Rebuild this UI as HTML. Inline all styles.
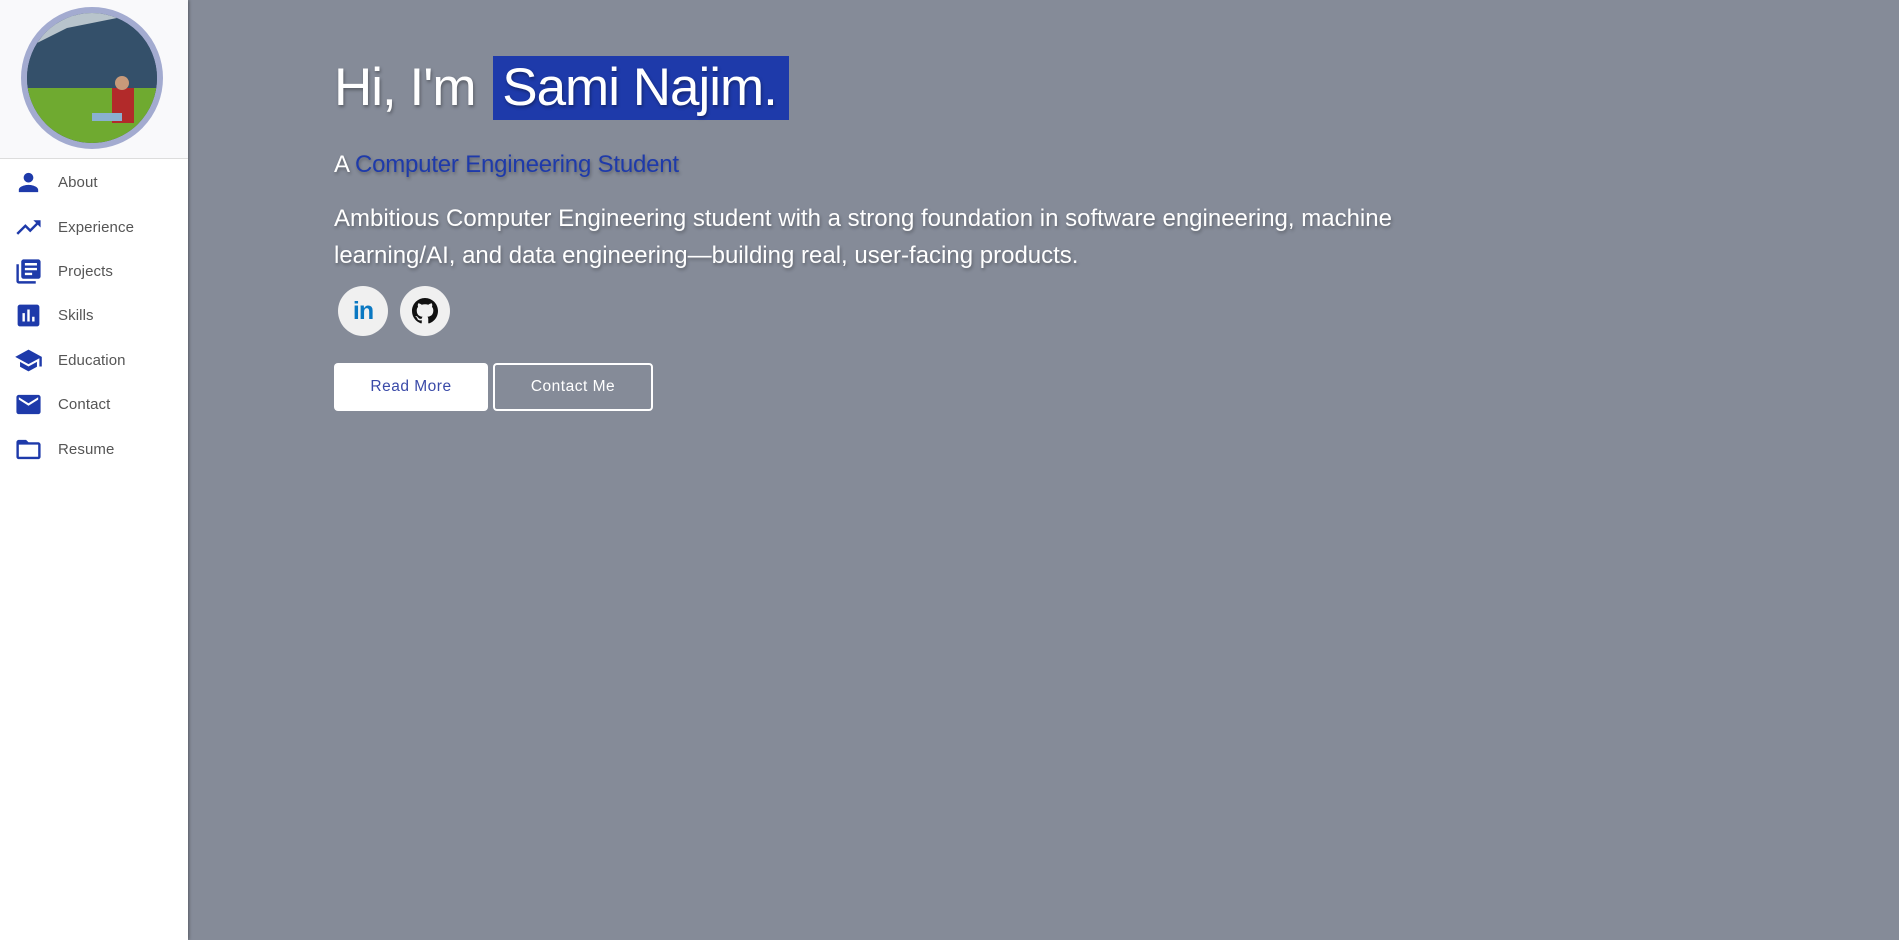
<!DOCTYPE html>
<html><head><meta charset="utf-8"><style>
*{margin:0;padding:0;box-sizing:border-box}
body{width:1899px;height:940px;overflow:hidden;background:#858b98;font-family:"Liberation Sans",sans-serif;position:relative}
#side{position:absolute;left:0;top:0;width:188px;height:940px;background:#fff;box-shadow:1px 0 3px rgba(0,0,0,.35)}
#head{height:159px;background:#f9f9fb;border-bottom:1px solid #ddd;position:relative}
#av{position:absolute;left:21px;top:7px;width:142px;height:142px;border-radius:50%;border:6px solid #a3abd0;overflow:hidden;background:#2d4558}
.nav{position:absolute;left:0;height:30px;display:flex;align-items:center}
.nav svg{position:absolute;left:14px;width:29px;height:29px;fill:#1e3aaa}
.nav span{position:absolute;left:58px;top:7px;font-size:15px;color:#555;white-space:nowrap;letter-spacing:.1px}
#main{position:absolute;left:334px;top:0;color:#fff}
h1{position:absolute;top:56px;left:0;font-weight:300;font-size:53px;letter-spacing:-1px;white-space:nowrap;text-shadow:1px 2px 3px rgba(0,0,0,.35);line-height:64px}
h1 b{font-weight:300;background:#1e3aaa;padding:2px 12px 3px 9px;margin-left:4px}
h2{position:absolute;top:151px;font-weight:300;font-size:24px;letter-spacing:-.2px;white-space:nowrap;text-shadow:1px 2px 3px rgba(0,0,0,.3)}
h2 i{font-style:normal;color:#1e3aaa}
p{position:absolute;top:200px;width:1120px;font-size:24px;font-weight:300;letter-spacing:0;line-height:37px;text-shadow:1px 2px 3px rgba(0,0,0,.3)}
.c{position:absolute;top:286px;width:50px;height:50px;border-radius:50%;background:#f0f0f0;display:flex;align-items:center;justify-content:center}
.btn{position:absolute;top:363px;height:48px;border-radius:4px;font-size:15.5px;display:flex;align-items:center;justify-content:center;letter-spacing:.5px}
</style></head><body>
<div id="side">
<div id="head"><div id="av"><svg width="130" height="130" viewBox="0 0 130 130"><path d="M0 40 L20 18 L50 8 L90 2 L130 10 L130 80 L0 80Z" fill="#34506a"/><path d="M0 0H130V20L90 5L40 15L0 35Z" fill="#b8c4cc"/><rect x="0" y="75" width="130" height="55" fill="#6faa30"/><rect x="85" y="75" width="22" height="35" fill="#b22a2a"/><circle cx="95" cy="70" r="7" fill="#c89a7a"/><rect x="65" y="100" width="30" height="8" fill="#8ab0d0"/></svg></div></div>
<div class="nav" style="top:167px"><svg viewBox="0 0 24 24"><path d="M12 12c2.21 0 4-1.790 4-4s-1.79-4-4-4-4 1.79-4 4 1.79 4 4 4zm0 2c-2.67 0-8 1.34-8 4v2h16v-2c0-2.66-5.33-4-8-4z"/></svg><span>About</span></div>
<div class="nav" style="top:212px"><svg viewBox="0 0 24 24"><path d="M16 6l2.29 2.29-4.88 4.88-4-4L2 16.59 3.41 18l6-6 4 4 6.3-6.29L22 12V6z"/></svg><span>Experience</span></div>
<div class="nav" style="top:256px"><svg viewBox="0 0 24 24"><path d="M4 6H2v14c0 1.1.9 2 2 2h14v-2H4V6zm16-4H8c-1.1 0-2 .9-2 2v12c0 1.1.9 2 2 2h12c1.1 0 2-.9 2-2V4c0-1.1-.9-2-2-2zm-1 9H9V9h10v2zm-4 4H9v-2h6v2zm4-8H9V5h10v2z"/></svg><span>Projects</span></div>
<div class="nav" style="top:300px"><svg viewBox="0 0 24 24"><path d="M19 3H5c-1.1 0-2 .9-2 2v14c0 1.1.9 2 2 2h14c1.1 0 2-.9 2-2V5c0-1.1-.9-2-2-2zM9 17H7v-7h2v7zm4 0h-2V7h2v10zm4 0h-2v-4h2v4z"/></svg><span>Skills</span></div>
<div class="nav" style="top:345px"><svg viewBox="0 0 24 24"><path d="M5 13.18v4L12 21l7-3.82v-4L12 17l-7-3.82zM12 3L1 9l11 6 9-4.91V17h2V9L12 3z"/></svg><span>Education</span></div>
<div class="nav" style="top:389px"><svg viewBox="0 0 24 24"><path d="M20 4H4c-1.1 0-1.99.9-1.99 2L2 18c0 1.1.9 2 2 2h16c1.1 0 2-.9 2-2V6c0-1.1-.9-2-2-2zm0 4l-8 5-8-5V6l8 5 8-5v2z"/></svg><span>Contact</span></div>
<div class="nav" style="top:434px"><svg viewBox="0 0 24 24"><path d="M20 6h-8l-2-2H4c-1.1 0-1.99.9-1.99 2L2 18c0 1.1.9 2 2 2h16c1.1 0 2-.9 2-2V8c0-1.1-.9-2-2-2zm0 12H4V8h16v10z"/></svg><span>Resume</span></div>
</div>
<div id="main">
<h1>Hi, I'm <b>Sami Najim.</b></h1>
<h2>A <i>Computer Engineering Student</i></h2>
<p>Ambitious Computer Engineering student with a strong foundation in software engineering, machine learning/AI, and data engineering—building real, user-facing products.</p>
<div class="c" style="left:4px"><span style="font-weight:bold;font-size:25px;color:#0a78c2;letter-spacing:-1px">in</span></div>
<div class="c" style="left:66px"><svg width="26" height="26" viewBox="0 0 16 16"><path fill="#111" d="M8 0C3.58 0 0 3.58 0 8c0 3.54 2.29 6.53 5.47 7.59.4.07.55-.17.55-.38 0-.19-.01-.82-.01-1.49-2.01.37-2.53-.49-2.69-.94-.09-.23-.48-.94-.82-1.13-.28-.15-.68-.52-.01-.53.63-.01 1.08.58 1.23.82.72 1.21 1.87.87 2.33.66.07-.52.28-.87.51-1.07-1.78-.2-3.64-.89-3.64-3.95 0-.87.31-1.59.82-2.15-.08-.2-.36-1.02.08-2.12 0 0 .67-.21 2.2.82.64-.18 1.32-.27 2-.27.68 0 1.36.09 2 .27 1.53-1.04 2.2-.82 2.2-.82.44 1.1.16 1.92.08 2.12.51.56.82 1.27.82 2.15 0 3.07-1.87 3.75-3.65 3.95.29.25.54.73.54 1.48 0 1.07-.01 1.93-.01 2.2 0 .21.15.46.55.38A8.013 8.013 0 0016 8c0-4.42-3.58-8-8-8z"/></svg></div>
<div class="btn" style="left:0;width:154px;background:#fff;color:#3a4aa8">Read More</div>
<div class="btn" style="left:159px;width:160px;border:2px solid #fff;color:#fff">Contact Me</div>
</div>
</body></html>
